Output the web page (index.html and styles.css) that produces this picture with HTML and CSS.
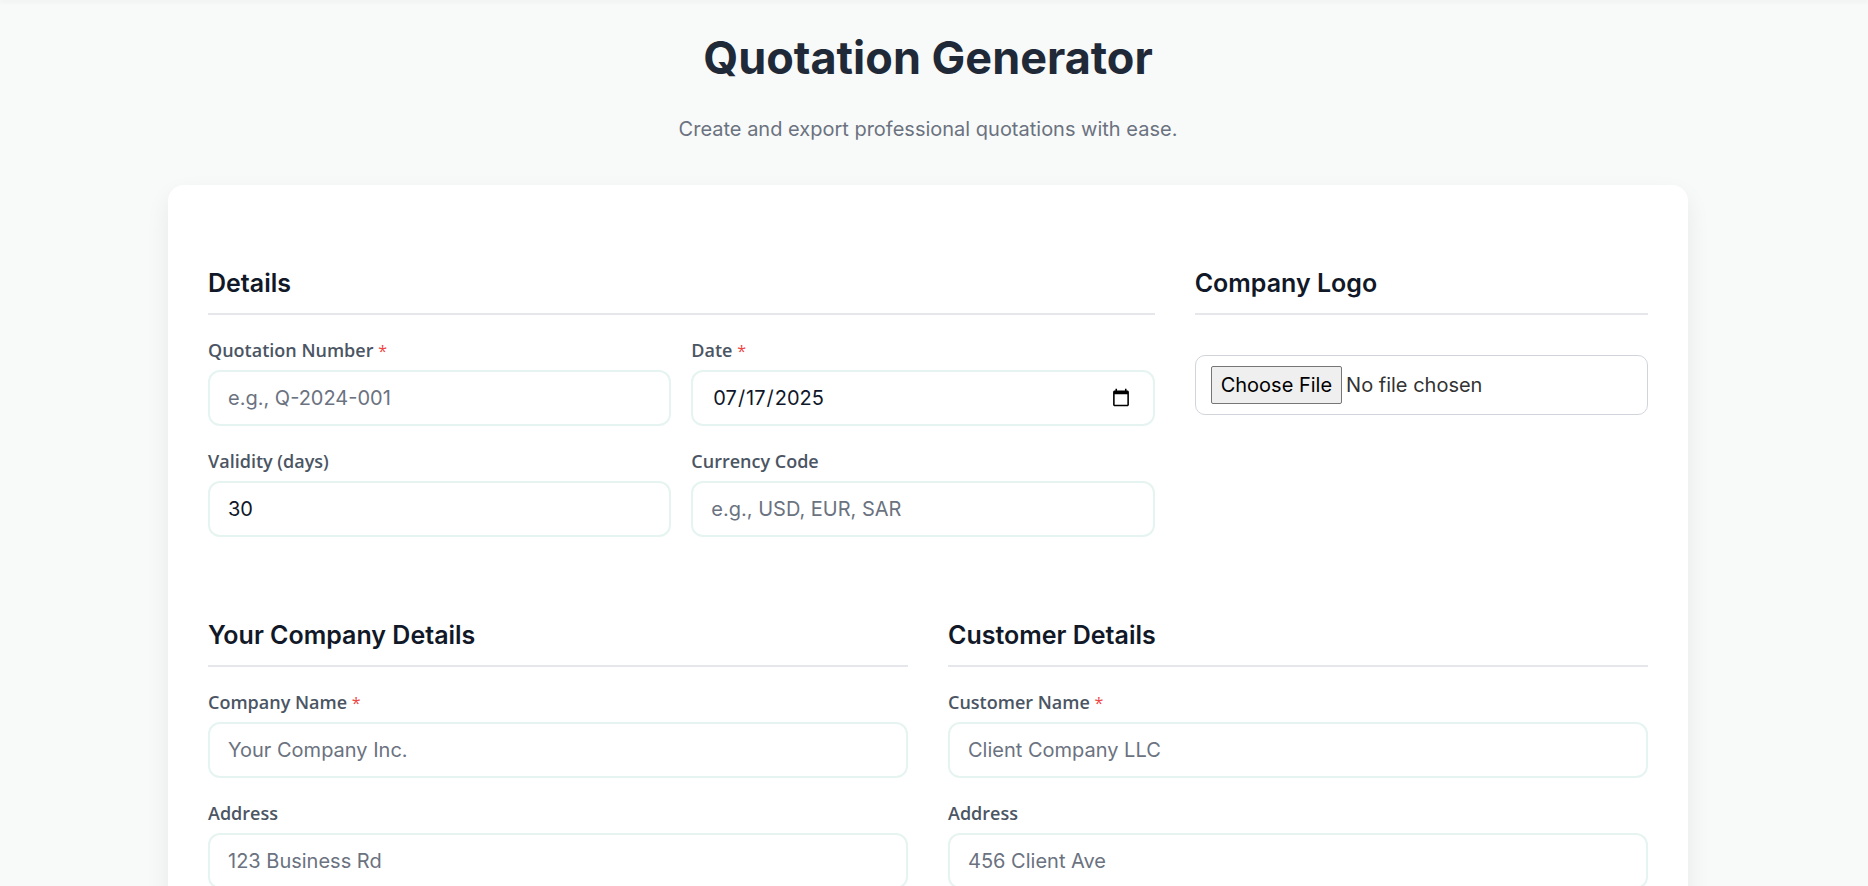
FILE: index.html
```html
<!DOCTYPE html>
<html lang="en">
<head>
<meta charset="utf-8">
<meta name="viewport" content="width=device-width, initial-scale=1">
<title>Quotation Generator</title>
<link rel="stylesheet" href="styles.css">
</head>
<body>
<div class="topbar"></div>
<main class="page">
  <header class="intro">
    <h1 class="intro-title">Quotation Generator</h1>
    <p class="intro-text">Create and export professional quotations with ease.</p>
  </header>
  <form class="card">
    <div class="row row-details">
      <section class="section">
        <h2 class="section-title">Details</h2>
        <div class="fields fields-two">
          <div class="field">
            <label class="label" for="number">Quotation Number <span class="required">*</span></label>
            <input class="input" id="number" type="text" placeholder="e.g., Q-2024-001">
          </div>
          <div class="field">
            <label class="label" for="date">Date <span class="required">*</span></label>
            <input class="input input-date" id="date" type="date" value="2025-07-17">
          </div>
          <div class="field">
            <label class="label" for="validity">Validity (days)</label>
            <input class="input" id="validity" type="number" value="30">
          </div>
          <div class="field">
            <label class="label" for="currency">Currency Code</label>
            <input class="input" id="currency" type="text" placeholder="e.g., USD, EUR, SAR">
          </div>
        </div>
      </section>
      <section class="section">
        <h2 class="section-title" id="logo-title">Company Logo</h2>
        <input class="file" type="file" accept="image/*" aria-labelledby="logo-title">
      </section>
    </div>
    <div class="row row-parties">
      <section class="section">
        <h2 class="section-title">Your Company Details</h2>
        <div class="fields">
          <div class="field">
            <label class="label" for="company">Company Name <span class="required">*</span></label>
            <input class="input" id="company" type="text" placeholder="Your Company Inc.">
          </div>
          <div class="field">
            <label class="label" for="company-address">Address</label>
            <input class="input" id="company-address" type="text" placeholder="123 Business Rd">
          </div>
        </div>
      </section>
      <section class="section">
        <h2 class="section-title">Customer Details</h2>
        <div class="fields">
          <div class="field">
            <label class="label" for="customer">Customer Name <span class="required">*</span></label>
            <input class="input" id="customer" type="text" placeholder="Client Company LLC">
          </div>
          <div class="field">
            <label class="label" for="customer-address">Address</label>
            <input class="input" id="customer-address" type="text" placeholder="456 Client Ave">
          </div>
        </div>
      </section>
    </div>
  </form>
</main>
</body>
</html>
```

FILE: styles.css
```css
* {
  box-sizing: border-box;
}

body {
  margin: 0;
  background: #f8faf9;
  color: #111827;
  font-family: Inter, "Liberation Sans", sans-serif;
  font-size: 20px;
}

.topbar {
  height: 0;
  box-shadow: 0 1px 4px 1px rgba(0, 0, 0, 0.06);
}

.page {
  padding: 30px 52px 40px 40px;
}

.intro {
  text-align: center;
  padding-bottom: 40px;
}

.intro-title {
  margin: 0 0 27px;
  color: #1f2937;
  font-size: 45px;
  font-weight: 700;
  line-height: 56px;
}

.intro-text {
  margin: 0;
  color: #6b7280;
  line-height: 32px;
}

.card {
  max-width: 1520px;
  margin: 0 auto;
  padding: 40px;
  border-radius: 16px;
  background: #ffffff;
  box-shadow: 0 10px 25px rgba(0, 0, 0, 0.07);
}

.row {
  display: grid;
  gap: 40px;
}

.row-details {
  grid-template-columns: repeat(3, 1fr);
  margin-bottom: 40px;
}

.row-details > :first-child {
  grid-column: span 2;
}

.row-parties {
  grid-template-columns: repeat(2, 1fr);
}

.section {
  padding-top: 42px;
}

.section-title {
  margin: 0 0 23px;
  padding-bottom: 14px;
  border-bottom: 2px solid #e5e7eb;
  font-size: 25px;
  font-weight: 600;
  line-height: 32px;
}

.fields {
  display: grid;
  gap: 23px 20px;
}

.fields-two {
  grid-template-columns: repeat(2, 1fr);
}

.field {
  display: flex;
  flex-direction: column;
  gap: 8px;
}

.label {
  color: #4b5563;
  font-family: "Open Sans", "Noto Sans", sans-serif;
  font-size: 18px;
  font-weight: 600;
  line-height: 24px;
}

.required {
  color: #ef4444;
  font-size: 16px;
  font-weight: 500;
  line-height: 16px;
}

.input {
  width: 100%;
  height: 56px;
  padding: 0 18px;
  border: 2px solid #e6f4f1;
  border-radius: 12px;
  background: #ffffff;
  color: #0f172a;
  font-family: inherit;
  font-size: 20px;
}

.input::placeholder {
  color: #6b7280;
}

.input-date {
  padding: 0 20px 0 19px;
}

.file {
  display: block;
  width: 100%;
  margin-top: 40px;
  padding: 10px 15px;
  border: 1px solid #d1d5db;
  border-radius: 10px;
  color: #333333;
  font-family: inherit;
  font-size: 20px;
}

.file::file-selector-button {
  height: 38px;
  padding: 0 9px;
  border: 1px solid #767676;
  border-radius: 2px;
  background: #efefef;
  color: #000000;
  font-family: inherit;
  font-size: 20px;
}
```
